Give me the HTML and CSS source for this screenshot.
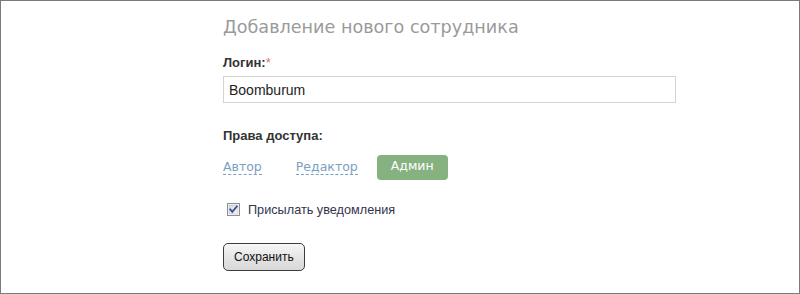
FILE: index.html
```html
<!DOCTYPE html>
<html lang="ru">
<head>
<meta charset="utf-8">
<title>Добавление нового сотрудника</title>
<link rel="stylesheet" href="styles.css">
</head>
<body>
<div class="frame">
  <form class="form">
    <h1 class="title">Добавление нового сотрудника</h1>
    <label class="field-label login-label" for="login">Логин:<span class="req">*</span></label>
    <input class="text-input" id="login" type="text" value="Boomburum">
    <div class="field-label rights-label">Права доступа:</div>
    <div class="roles">
      <a class="role role-author">Автор</a>
      <a class="role role-editor">Редактор</a>
      <span class="role-active">Админ</span>
    </div>
    <label class="check">
      <span class="box">
        <svg width="13" height="13" viewBox="0 0 13 13">
          <defs>
            <linearGradient id="cbg" x1="0" y1="0" x2="1" y2="1">
              <stop offset="0" stop-color="#d6d9de"/>
              <stop offset="1" stop-color="#f4f5f7"/>
            </linearGradient>
          </defs>
          <rect x="0.5" y="0.5" width="12" height="12" fill="#fff" stroke="#8c8f94"/>
          <rect x="2" y="2" width="9" height="9" fill="url(#cbg)" stroke="#b9bcc2" stroke-width="0.6"/>
          <path d="M3.2 6.4 L5.3 8.8 L9.8 3.4" fill="none" stroke="#3a4f8e" stroke-width="1.8" stroke-linecap="square"/>
        </svg>
      </span>
      Присылать уведомления
    </label>
    <button class="save" type="button">Сохранить</button>
  </form>
</div>
</body>
</html>
```

FILE: styles.css
```css
* { box-sizing: border-box; }
html, body {
  margin: 0;
  padding: 0;
  background: #fff;
}
.frame {
  width: 800px;
  height: 294px;
  border: 1px solid #7b7b7b;
  padding: 15px 0 0 222px;
}
.form {
  display: flex;
  flex-direction: column;
  align-items: flex-start;
  margin: 0;
}
.title {
  margin: 0;
  font-family: "DejaVu Sans", Verdana, sans-serif;
  font-weight: normal;
  font-size: 17.6px;
  line-height: 22px;
  color: #9a9a9a;
}
.field-label {
  font-family: "Liberation Sans", Arial, sans-serif;
  font-weight: bold;
  font-size: 13px;
  line-height: 16px;
  color: #333;
}
.login-label { margin-top: 17px; }
.req { color: #f06a6a; font-weight: normal; }
.text-input {
  margin-top: 5px;
  width: 453px;
  height: 27px;
  border: 1px solid #d4d4d4;
  padding: 0 5px;
  font-family: "Liberation Sans", Arial, sans-serif;
  font-size: 14px;
  color: #222;
  outline: none;
}
.rights-label { margin-top: 25px; }
.roles {
  margin-top: 11px;
  display: flex;
  align-items: flex-start;
}
.role {
  margin-top: 4px;
  font-family: "DejaVu Sans", Verdana, sans-serif;
  font-size: 12.5px;
  line-height: 15px;
  color: #7aa0c2;
  border-bottom: 1px dashed #7aa0c2;
  cursor: pointer;
}
.role-author { margin-right: 34px; }
.role-editor { margin-right: 19px; }
.role-active {
  height: 25px;
  padding: 0 14px 4px;
  line-height: 21px;
  font-family: "DejaVu Sans", Verdana, sans-serif;
  font-size: 12.5px;
  color: #fff;
  background: #86b180;
  border-radius: 4px;
}
.check {
  margin-top: 23px;
  display: flex;
  align-items: flex-start;
  font-family: "Liberation Sans", Arial, sans-serif;
  font-size: 12.7px;
  line-height: 15px;
  color: #34344f;
}
.box {
  display: block;
  width: 13px;
  height: 13px;
  margin: 0 8px 0 4px;
}
.box svg { display: block; }
.save {
  margin-top: 25px;
  height: 28px;
  padding: 0 10px;
  border: 1px solid #3c3c3c;
  border-radius: 5px;
  background: linear-gradient(#f7f7f7, #e2e2e2 60%, #d8d8d8);
  font-family: "Liberation Sans", Arial, sans-serif;
  font-size: 12px;
  color: #111;
}
```
